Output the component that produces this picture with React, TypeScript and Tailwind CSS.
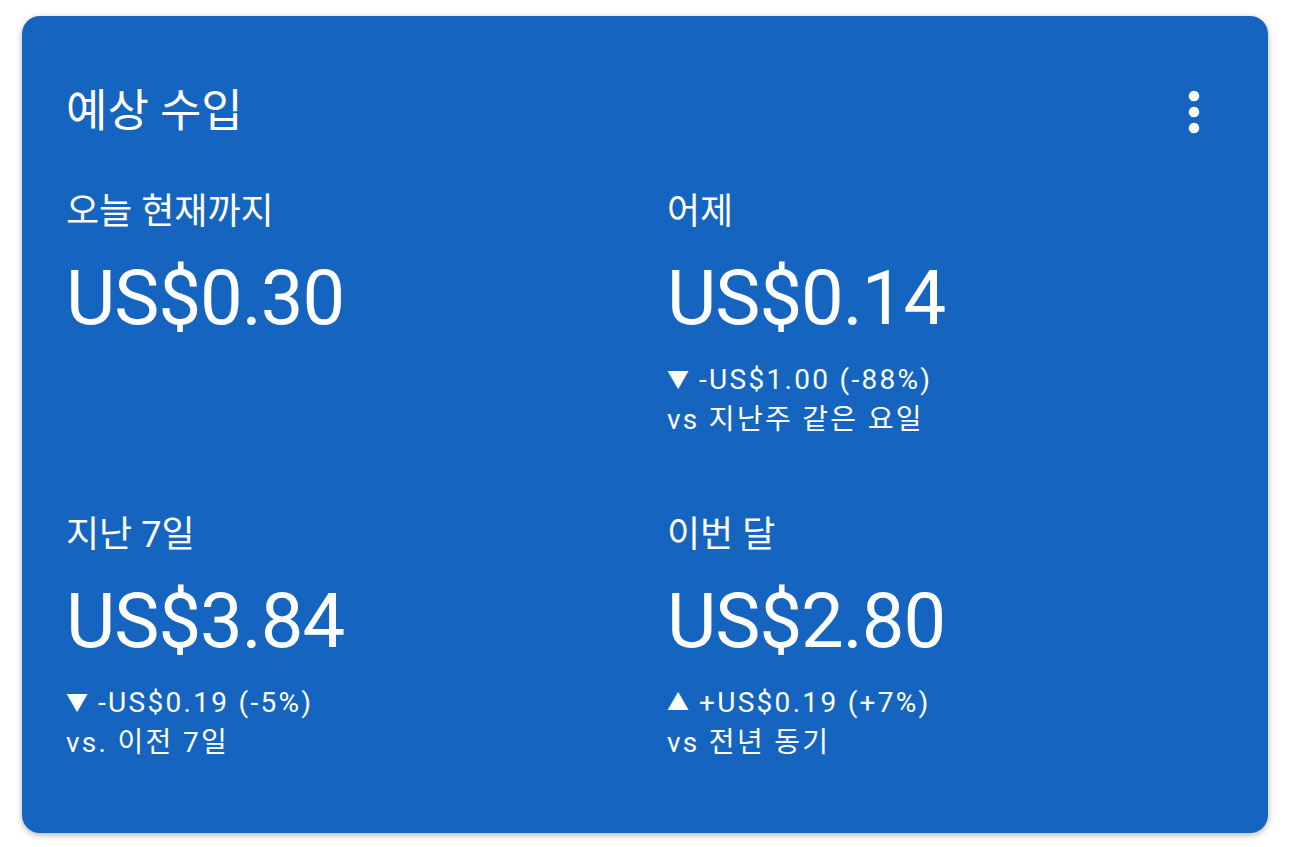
import React from 'react';

type Stat = {
  label: string;
  value: string;
  change?: string;
  up?: boolean;
  compare?: string;
};

const stats: Stat[] = [
  { label: '오늘 현재까지', value: 'US$0.30' },
  { label: '어제', value: 'US$0.14', change: '-US$1.00 (-88%)', compare: 'vs 지난주 같은 요일' },
  { label: '지난 7일', value: 'US$3.84', change: '-US$0.19 (-5%)', compare: 'vs. 이전 7일' },
  { label: '이번 달', value: 'US$2.80', change: '+US$0.19 (+7%)', up: true, compare: 'vs 전년 동기' },
];

const font = { fontFamily: 'Roboto, "Noto Sans CJK KR", sans-serif' };

function MoreIcon() {
  return (
    <svg width="12" height="44" viewBox="0 0 12 44" fill="white">
      <circle cx="6" cy="6" r="5.3" />
      <circle cx="6" cy="22" r="5.3" />
      <circle cx="6" cy="38" r="5.3" />
    </svg>
  );
}

function StatBlock({ stat }: { stat: Stat }) {
  return (
    <div className="flex flex-col">
      <div className="text-[36px] leading-[40px]">{stat.label}</div>
      <div className="mt-[26px] text-[76px] leading-[80px] tracking-[-1px]">{stat.value}</div>
      {stat.change && (
        <div className="mt-[22px] text-[28px] leading-[40px] tracking-[2.3px]">
          <div className="flex items-center">
            <span className="mr-[10px] text-[22px] tracking-normal">{stat.up ? '▲' : '▼'}</span>
            <span>{stat.change}</span>
          </div>
          <div>{stat.compare}</div>
        </div>
      )}
    </div>
  );
}

export default function App() {
  return (
    <div className="min-h-screen bg-white pl-[22px] pt-[16px]" style={font}>
      <div className="w-[1246px] h-[817px] rounded-[18px] bg-[#1565c0] text-white shadow-[0_2px_6px_rgba(0,0,0,0.3)] pl-[44px] pr-[68px] pt-[74px]">
        {/* Header */}
        <div className="flex items-center justify-between h-[44px]">
          <h2 className="text-[45px] leading-[44px]">예상 수입</h2>
          <MoreIcon />
        </div>

        {/* Stats */}
        <div className="mt-[58px] grid grid-cols-[601px_1fr] gap-y-[75px]">
          {stats.map((s) => (
            <StatBlock key={s.label} stat={s} />
          ))}
        </div>
      </div>
    </div>
  );
}
